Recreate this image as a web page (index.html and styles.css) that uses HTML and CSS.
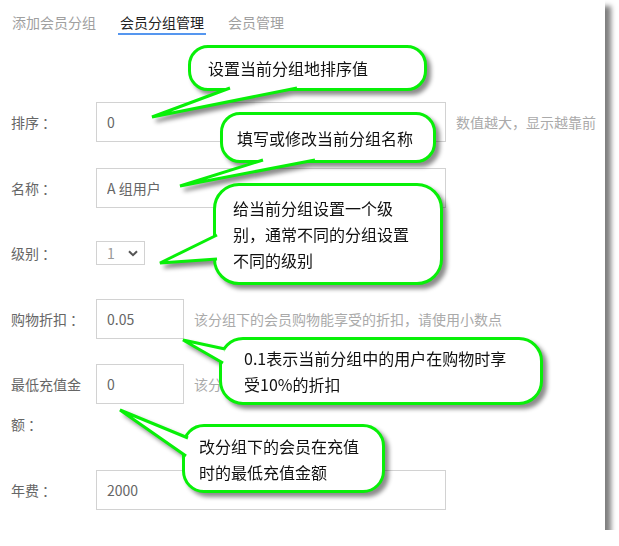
FILE: index.html
```html
<!DOCTYPE html>
<html lang="zh-CN">
<head>
<meta charset="utf-8">
<title>会员分组管理</title>
<link rel="stylesheet" href="styles.css">
</head>
<body>
<div class="frame">
  <nav class="tabs">
    <span class="tab">添加会员分组</span>
    <span class="tab active">会员分组管理</span>
    <span class="tab">会员管理</span>
  </nav>
  <form class="form">
    <div class="row">
      <label class="label">排序<span class="colon">：</span></label>
      <input class="field wide" value="0">
      <span class="help">数值越大，显示越靠前</span>
    </div>
    <div class="row">
      <label class="label">名称<span class="colon">：</span></label>
      <input class="field wide" value="A 组用户">
    </div>
    <div class="row">
      <label class="label">级别<span class="colon">：</span></label>
      <div class="select">
        <span>1</span>
        <svg class="chev" width="10" height="7" viewBox="0 0 10 7"><path d="M1 1.2 L5 5.2 L9 1.2" fill="none" stroke="#555" stroke-width="2"/></svg>
      </div>
    </div>
    <div class="row">
      <label class="label">购物折扣<span class="colon">：</span></label>
      <input class="field narrow" value="0.05">
      <span class="help">该分组下的会员购物能享受的折扣，请使用小数点</span>
    </div>
    <div class="row">
      <label class="label">最低充值金额<span class="colon">：</span></label>
      <input class="field narrow" value="0">
      <span class="help">该分组下的会员最低充值金额</span>
    </div>
    <div class="row">
      <label class="label">年费<span class="colon">：</span></label>
      <input class="field wide" value="2000">
    </div>
  </form>

  <div class="callout c1">
    <svg class="tail"><path d="M42 43 L-36 72 L109 43"/></svg>
    <span class="ctext">设置当前分组地排序值</span>
  </div>
  <div class="callout c2">
    <svg class="tail"><path d="M43 48 L-40 74 L95 48"/></svg>
    <span class="ctext">填写或修改当前分组名称</span>
  </div>
  <div class="callout c3">
    <svg class="tail"><path d="M4 52 L-53 80 L4 76"/></svg>
    <span class="ctext">给当前分组设置一个级<br>别，通常不同的分组设置<br>不同的级别</span>
  </div>
  <div class="callout c4">
    <svg class="tail"><path d="M6 12 L-36 3 L4 26"/></svg>
    <span class="ctext">0.1表示当前分组中的用户在购物时享<br>受10%的折扣</span>
  </div>
  <div class="callout c5">
    <svg class="tail"><path d="M6 14 L-62 -14 L4 32"/></svg>
    <span class="ctext">改分组下的会员在充值<br>时的最低充值金额</span>
  </div>
</div>
</body>
</html>
```
FILE: styles.css
```css
* { box-sizing: border-box; }
html, body { margin: 0; padding: 0; background: #fff; }
body {
  font-family: "Noto Sans CJK SC", "Noto Sans", sans-serif;
  font-size: 14px;
  color: #333;
}
.frame {
  position: relative;
  width: 605px;
  height: 530px;
  background: #fff;
  box-shadow: 6px 6px 5px rgba(0, 0, 0, 0.5);
}
.tabs {
  display: flex;
  gap: 20px;
  padding-left: 10px;
}
.tab {
  padding: 11px 2px 0;
  line-height: 22px;
  color: #a0a0a0;
  border-bottom: 2px solid transparent;
}
.tab.active {
  color: #222;
  border-bottom-color: #5596ef;
}
.form {
  display: flex;
  flex-direction: column;
  gap: 25.6px;
  padding: 67px 0 0 11px;
  margin: 0;
}
.row {
  display: flex;
  align-items: flex-start;
}
.label {
  width: 77px;
  margin-right: 8px;
  line-height: 40px;
  color: #666;
}
.colon {
  margin-left: 3px;
}
.field {
  height: 40px;
  border: 1px solid #d2d2d2;
  border-radius: 0;
  padding: 0 10px;
  font: inherit;
  font-family: "Noto Sans CJK SC", "Noto Sans", sans-serif;
  font-size: 14px;
  color: #666;
  background: #fff;
  outline: none;
}
.wide { width: 350px; }
.narrow { width: 88px; }
.help {
  margin-left: 10px;
  line-height: 40px;
  color: #aaa;
  white-space: nowrap;
}
.select {
  margin-top: 8px;
  width: 49px;
  height: 24px;
  border: 1px solid #d2d2d2;
  display: flex;
  align-items: center;
  justify-content: space-between;
  padding: 0 6px 0 10px;
  color: #999;
}
.chev { display: block; }

.callout {
  position: absolute;
  display: flex;
  align-items: center;
  border: 3px solid #08f008;
  border-radius: 20px;
  background: #fff;
  filter: drop-shadow(4px 4px 2px rgba(0, 0, 0, 0.45));
  font-size: 16px;
  line-height: 26px;
  color: #111;
  white-space: nowrap;
}
.tail {
  position: absolute;
  left: -3px;
  top: -3px;
  width: 1px;
  height: 1px;
  overflow: visible;
}
.tail path {
  fill: #fff;
  stroke: #08f008;
  stroke-width: 3;
  stroke-linejoin: miter;
}
.ctext { position: relative; }
.c1 { left: 188px; top: 45px; width: 239px; height: 46px; padding-left: 17px; }
.c2 { left: 220px; top: 112px; width: 216px; height: 51px; padding-left: 14px; }
.c3 { left: 213px; top: 183px; width: 230px; height: 102px; padding-left: 17px; border-radius: 26px; }
.c4 { left: 219px; top: 337px; width: 324px; height: 68px; padding-left: 22px; border-radius: 24px; }
.c5 { left: 182px; top: 424px; width: 203px; height: 69px; padding-left: 14px; border-radius: 22px; }
```
